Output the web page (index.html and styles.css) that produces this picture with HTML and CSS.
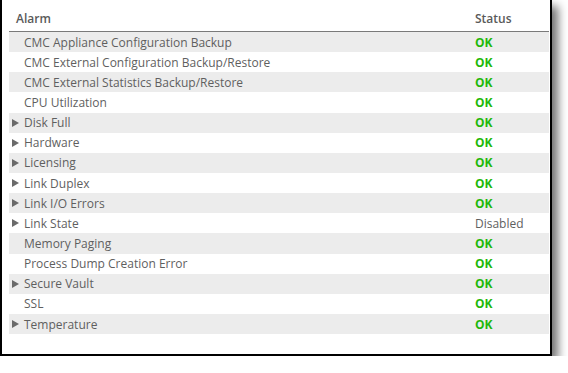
FILE: index.html
```html
<!DOCTYPE html>
<html>
<head>
    <title>Alarm Status</title>
    <meta charset="utf-8">
    <link rel="stylesheet" href="styles.css">
</head>
<body>
    <div class="frame">
        <div class="table">
            <div class="row head">
                <div class="cell name">Alarm</div>
                <div class="cell status">Status</div>
            </div>
            <div class="row"><div class="cell name">CMC Appliance Configuration Backup</div><div class="cell status ok">OK</div></div>
            <div class="row"><div class="cell name">CMC External Configuration Backup/Restore</div><div class="cell status ok">OK</div></div>
            <div class="row"><div class="cell name">CMC External Statistics Backup/Restore</div><div class="cell status ok">OK</div></div>
            <div class="row"><div class="cell name">CPU Utilization</div><div class="cell status ok">OK</div></div>
            <div class="row"><div class="cell name"><span class="arrow"></span>Disk Full</div><div class="cell status ok">OK</div></div>
            <div class="row"><div class="cell name"><span class="arrow"></span>Hardware</div><div class="cell status ok">OK</div></div>
            <div class="row"><div class="cell name"><span class="arrow"></span>Licensing</div><div class="cell status ok">OK</div></div>
            <div class="row"><div class="cell name"><span class="arrow"></span>Link Duplex</div><div class="cell status ok">OK</div></div>
            <div class="row"><div class="cell name"><span class="arrow"></span>Link I/O Errors</div><div class="cell status ok">OK</div></div>
            <div class="row"><div class="cell name"><span class="arrow"></span>Link State</div><div class="cell status">Disabled</div></div>
            <div class="row"><div class="cell name">Memory Paging</div><div class="cell status ok">OK</div></div>
            <div class="row"><div class="cell name">Process Dump Creation Error</div><div class="cell status ok">OK</div></div>
            <div class="row"><div class="cell name"><span class="arrow"></span>Secure Vault</div><div class="cell status ok">OK</div></div>
            <div class="row"><div class="cell name">SSL</div><div class="cell status ok">OK</div></div>
            <div class="row"><div class="cell name"><span class="arrow"></span>Temperature</div><div class="cell status ok">OK</div></div>
        </div>
    </div>
</body>
</html>
```

FILE: styles.css
```css
body {
    margin: 0;
    background-color: #fff;
    font-family: "Open Sans", Arial, sans-serif;
    font-size: 12px;
    color: #5f5f5f;
}
.frame {
    width: 540px;
    height: 354px;
    padding: 0 1px 0 7px;
    border: 2px solid #000;
    border-top: none;
    background-color: #fff;
    box-shadow: 6px 6px 9px rgba(0, 0, 0, 0.55);
}
.table {
    padding-top: 8px;
}
.row {
    display: grid;
    grid-template-columns: 1fr 80px;
    height: 20.15px;
    align-items: center;
}
.row:nth-child(even) {
    background-color: #ececec;
}
.row.head {
    height: 24px;
    border-bottom: 1px solid #7a7a7a;
    font-weight: 600;
    color: #5a5a5a;
    align-items: start;
    padding-top: 2px;
    box-sizing: border-box;
}
.row.head .name {
    padding-left: 7px;
}
.name {
    display: flex;
    align-items: center;
    padding-left: 15px;
}
.arrow {
    width: 0;
    height: 0;
    margin-left: -12px;
    margin-right: 5px;
    border-top: 4px solid transparent;
    border-bottom: 4px solid transparent;
    border-left: 7px solid #6a6a6a;
}
.status {
    padding-left: 6px;
}
.ok {
    color: #1fb80a;
    font-weight: 700;
}
```
